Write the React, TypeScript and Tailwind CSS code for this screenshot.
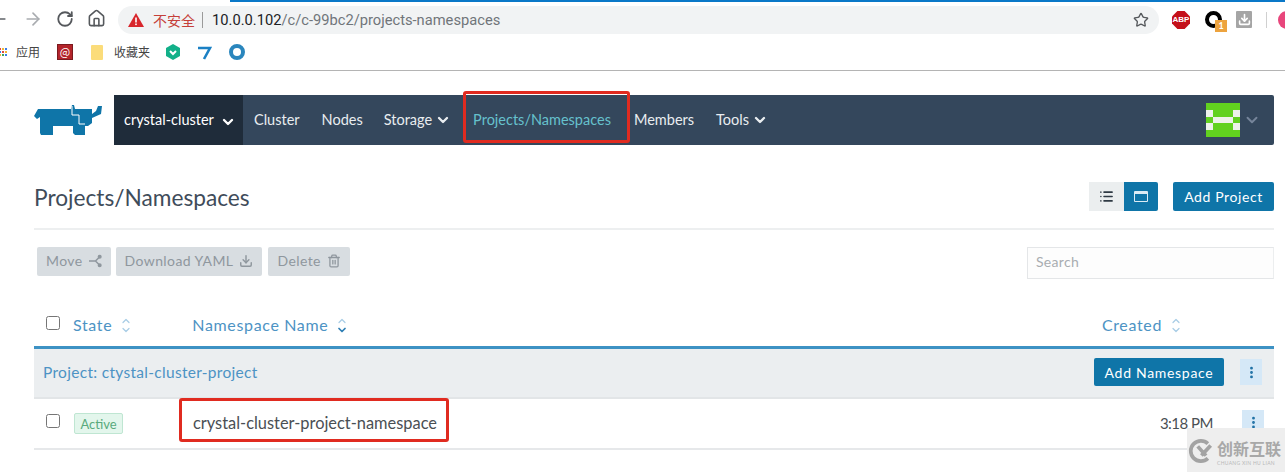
import React from 'react';
import { ArrowLeft, ArrowRight, RotateCw, Home, Star, ChevronDown, ChevronUp, Download, Trash2, List, EllipsisVertical } from 'lucide-react';

const SortIcon = ({ active }: { active?: boolean }) => (
  <span className="flex flex-col items-center -space-y-[3px]">
    <ChevronUp size={12} strokeWidth={2.5} className="text-[#a9cde6]" />
    <ChevronDown size={12} strokeWidth={active ? 3.5 : 2.5} className={active ? 'text-[#2f7fb5]' : 'text-[#a9cde6]'} />
  </span>
);

const Logo = () => (
  <svg width="68" height="31" viewBox="0 0 68 31">
    <path fill="#0f75a8" d="M4 4 L37 4 L38 0 L40 0 L41 4 L58 4 L58 9 L62 6 L64 1 L68 1 L67 9 L58 13 L58 18 L54 21 L51 21 L51 30 L41 30 L39 28 L39 21 L19 21 L19 30 L7 30 L6 28 L6 12 L3 14 L0 11 Z" />
    <path fill="none" stroke="#fff" strokeWidth="1" d="M38 1 L38 10 L45 10 L45 19 L51 19" />
  </svg>
);

const MoveIcon = () => (
  <svg width="13" height="14" viewBox="0 0 14 14" fill="none" stroke="currentColor" strokeWidth="1.6">
    <path d="M0 7 L7 7 L11 3 M7 7 L11 11" />
    <circle cx="11.5" cy="2.5" r="1.4" fill="currentColor" />
    <circle cx="11.5" cy="11.5" r="1.4" fill="currentColor" />
  </svg>
);

const GreyButton = ({ label, icon, className = '' }: { label: string; icon: React.ReactNode; className?: string }) => (
  <button className={`h-[29px] px-[9px] pb-[2px] flex items-center gap-[6px] rounded-[2px] bg-[#d8dde1] text-[#8f979e] text-[14px] tracking-[0.4px] ${className}`}>
    {label}
    {icon}
  </button>
);

const KebabButton = ({ className }: { className: string }) => (
  <button className={`w-[22px] h-[26px] flex items-center justify-center bg-[#d5e8f7] text-[#1b6ea3] ${className}`}>
    <EllipsisVertical size={15} strokeWidth={2.5} />
  </button>
);

const Avatar = () => (
  <div className="w-[34px] h-[34px] bg-[#62d11f] grid grid-cols-5 grid-rows-5">
    <span className="col-start-1 row-start-2 bg-[#eef1ea]" />
    <span className="col-start-5 row-start-2 bg-[#eef1ea]" />
    <span className="col-start-1 col-end-6 row-start-3 mx-[7px] bg-[#eef1ea]" />
    <span className="col-start-1 row-start-4 bg-[#eef1ea]" />
    <span className="col-start-5 row-start-4 bg-[#eef1ea]" />
  </div>
);

export default function App() {
  return (
    <div className="relative w-[1285px] h-[472px] overflow-hidden bg-white font-['Lato','Noto_Sans_CJK_SC',sans-serif] text-[#3f4a54]">
      {/* browser chrome */}
      <div className="h-[71px] border-b border-[#b4b4b4] relative">
        <div className="absolute top-0 left-[230px] right-0 h-[2px] bg-[#0a78c8]" />
        <div className="h-[39px] pt-[6px] flex items-start">
          <ArrowLeft size={20} className="ml-[-11px] mt-[3px] shrink-0 text-[#5f6368]" />
          <ArrowRight size={20} className="ml-[14px] mt-[3px] shrink-0 text-[#a9acb0]" />
          <RotateCw size={18} strokeWidth={2.4} className="ml-[13px] mt-[4px] shrink-0 text-[#55585c]" />
          <Home size={19} className="ml-[13px] mt-[3px] shrink-0 text-[#55585c]" />
          <div className="ml-[12px] w-[1041px] h-[28px] shrink-0 rounded-full bg-[#f1f3f4] flex items-center pl-[10px] pr-[10px]">
            <svg width="16" height="14" viewBox="0 0 16 14">
              <path fill="#d8262c" d="M8 0 L16 14 L0 14 Z" />
              <rect x="7.2" y="4.5" width="1.6" height="5" fill="#fff" />
              <rect x="7.2" y="10.5" width="1.6" height="1.6" fill="#fff" />
            </svg>
            <span className="ml-[9px] text-[14px] text-[#c5403a] font-['Noto_Sans_CJK_SC',sans-serif]">不安全</span>
            <span className="ml-[7px] w-px h-[16px] bg-[#9a9a9a]" />
            <span className="ml-[9px] text-[14.7px] font-['Roboto',sans-serif] text-[#202124]">
              10.0.0.102<span className="text-[#70757a]">/c/c-99bc2/projects-namespaces</span>
            </span>
            <Star size={16} className="ml-auto text-[#55585c]" />
          </div>
          <div className="relative ml-[13px] mt-[5px] w-[18px] h-[18px] shrink-0 bg-[#c4101a] [clip-path:polygon(30%_0,70%_0,100%_30%,100%_70%,70%_100%,30%_100%,0_70%,0_30%)] flex items-center justify-center text-white text-[8px] font-bold font-['Liberation_Sans',sans-serif]">
            ABP
          </div>
          <div className="relative ml-[15px] mt-[5px] w-[17px] h-[17px] shrink-0 rounded-full border-[4px] border-black">
            <span className="absolute left-[6px] top-[5px] w-[12px] h-[12px] bg-[#eda33e] text-white text-[9px] leading-[12px] text-center font-bold">1</span>
          </div>
          <div className="ml-[14px] mt-[5px] w-[16px] h-[17px] shrink-0 rounded-[1px] bg-[#a5a5a5] flex items-center justify-center">
            <Download size={13} strokeWidth={3} className="text-white" />
          </div>
          <span className="ml-[14px] mt-[6px] w-px h-[16px] shrink-0 bg-[#d0d0d0]" />
          <span className="ml-[11px] mt-[5px] w-[18px] h-[18px] rounded-full bg-[#e8467c] shrink-0" />
        </div>
        <div className="h-[24px] mt-[1px] flex items-center text-[12px] text-[#444] font-['Noto_Sans_CJK_SC',sans-serif]">
          <div className="ml-[-1px] grid grid-cols-3 gap-[1px] w-[8px]">
            <span className="h-[2px] bg-[#e0483e]" /><span className="h-[2px] bg-[#f2b632]" /><span className="h-[2px] bg-[#3a7de8]" />
            <span className="h-[2px] bg-[#3a7de8]" /><span className="h-[2px] bg-[#e0483e]" /><span className="h-[2px] bg-[#f2b632]" />
            <span className="h-[2px] bg-[#f2b632]" /><span className="h-[2px] bg-[#3ba55c]" /><span className="h-[2px] bg-[#3a7de8]" />
          </div>
          <span className="ml-[9px]">应用</span>
          <span className="ml-[17px] w-[16px] h-[16px] bg-[#b3242a] border border-[#7b1a1e] text-white text-[11px] leading-[13px] text-center">@</span>
          <span className="ml-[18px] w-[12px] h-[15px] bg-[#fbdc7a] rounded-[1px]" />
          <span className="ml-[11px]">收藏夹</span>
          <svg className="ml-[15px]" width="16" height="16" viewBox="0 0 16 16">
            <path fill="#12b089" d="M8 0 L15 4 L15 12 L8 16 L1 12 L1 4 Z" />
            <path fill="none" stroke="#fff" strokeWidth="2" d="M5 7 L8 10 L11 7" />
          </svg>
          <svg className="ml-[16px]" width="15" height="15" viewBox="0 0 15 15">
            <path fill="none" stroke="#1b80c4" strokeWidth="2.6" d="M1 3 L13 3 L7 14" />
          </svg>
          <span className="ml-[17px] w-[16px] h-[16px] rounded-full border-[4px] border-[#2a86bd]" />
        </div>
      </div>

      {/* rancher header */}
      <div className="mt-[24px] ml-[34px] w-[1240px] flex items-center">
        <div className="w-[80px] h-[50px] flex items-center">
          <Logo />
        </div>
        <nav className="flex-1 h-[50px] bg-[#34475c] rounded-r-[2px] flex items-center text-[14.5px] text-[#e9edf0]">
          <div className="w-[129px] h-full bg-[#1f2c3a] pl-[10px] flex items-center gap-[6px] text-white">
            crystal-cluster
            <ChevronDown size={16} strokeWidth={3.5} className="mt-[4px]" />
          </div>
          <span className="ml-[11px]">Cluster</span>
          <span className="ml-[22px]">Nodes</span>
          <span className="ml-[21px] flex items-center gap-[3px]">
            Storage <ChevronDown size={16} strokeWidth={3.5} />
          </span>
          <span className="ml-[22px] text-[#66c1cd]">Projects/Namespaces</span>
          <span className="ml-[23px]">Members</span>
          <span className="ml-[22px] flex items-center gap-[3px]">
            Tools <ChevronDown size={16} strokeWidth={3.5} />
          </span>
          <div className="ml-auto mr-[13px] flex items-center gap-[3px]">
            <Avatar />
            <ChevronDown size={18} strokeWidth={2.5} className="text-[#76859a]" />
          </div>
        </nav>
      </div>

      {/* page title */}
      <div className="ml-[34px] w-[1240px] h-[85px] border-b-2 border-[#edeff0] flex items-center">
        <h1 className="text-[22.7px] text-[#3f4c5a] mt-[24px]">Projects/Namespaces</h1>
        <div className="ml-auto mt-[20px] flex items-center">
          <div className="w-[35px] h-[29px] bg-[#ebeeef] flex items-center justify-center text-[#2f3a44]">
            <List size={15} strokeWidth={2.5} />
          </div>
          <div className="w-[34px] h-[29px] bg-[#0f75a8] rounded-r-[2px] flex items-center justify-center">
            <span className="w-[14px] h-[11px] border border-[#dcecf5] border-t-[3px] rounded-[1px]" />
          </div>
          <button className="ml-[15px] w-[101px] h-[29px] rounded-[2px] bg-[#0f75a8] text-white text-[14px] tracking-[0.6px]">
            Add Project
          </button>
        </div>
      </div>

      {/* bulk actions + search */}
      <div className="ml-[37px] w-[1237px] mt-[17px] flex items-start">
        <div className="flex gap-[5px]">
          <GreyButton label="Move" icon={<MoveIcon />} />
          <GreyButton label="Download YAML" icon={<Download size={14} strokeWidth={2.5} />} />
          <GreyButton label="Delete" icon={<Trash2 size={14} strokeWidth={2.2} />} className="ml-[1px]" />
        </div>
        <div className="ml-auto w-[247px] h-[32px] pb-[3px] border border-[#e4e6e8] border-r-[#eceeef] bg-[#fdfdfd] pl-[8px] flex items-center text-[14px] text-[#a9adb1] tracking-[0.3px]">
          Search
        </div>
      </div>

      {/* table header */}
      <div className="ml-[34px] w-[1240px] h-[42px] mt-[25px] flex items-center text-[16px] tracking-[0.65px] text-[#4d93c4]">
        <input type="checkbox" readOnly className="ml-[12px] w-[14px] h-[14px] mb-[5px]" />
        <span className="ml-[13px] flex items-center gap-[8px]">State <SortIcon /></span>
        <span className="ml-[60px] flex items-center gap-[8px]">Namespace Name <SortIcon active /></span>
        <span className="ml-auto mr-[92px] flex items-center gap-[8px]">Created <SortIcon /></span>
      </div>

      {/* project group */}
      <div className="ml-[34px] w-[1240px] h-[53px] border-t-[3px] border-[#3d92c4] border-b-2 border-b-[#e2e5e7] bg-[#ebeef0] flex items-center">
        <span className="ml-[9px] text-[15.5px] tracking-[0.3px] text-[#4d93c4]">Project: ctystal-cluster-project</span>
        <button className="ml-auto w-[130px] h-[28px] mb-[2px] rounded-[2px] bg-[#0f75a8] text-white text-[14px] tracking-[0.7px]">
          Add Namespace
        </button>
        <KebabButton className="ml-[16px] mr-[12px] mb-[2px]" />
      </div>

      {/* namespace row */}
      <div className="ml-[34px] w-[1240px] h-[51px] border-b-2 border-[#e6e8ea] flex items-center">
        <input type="checkbox" readOnly className="ml-[12px] w-[14px] h-[14px] mb-[5px]" />
        <span className="ml-[14px] w-[49px] h-[21px] border border-[#bfe6d2] rounded-[2px] bg-[#e3f6ec] text-[#5aaa7c] text-[13px] leading-[20px] text-center">
          Active
        </span>
        <span className="ml-[70px] text-[16.4px] text-[#4a4f54]">crystal-cluster-project-namespace</span>
        <span className="ml-auto text-[15px] text-[#4a4f54] -tracking-[0.5px]">3:18 PM</span>
        <KebabButton className="ml-[29px] mr-[10px] mb-[2px]" />
      </div>

      {/* annotation boxes */}
      <div className="absolute left-[463px] top-[91px] w-[167px] h-[52px] border-[3px] border-[#e02b20] rounded-[3px]" />
      <div className="absolute left-[179px] top-[398px] w-[270px] h-[44px] border-[3px] border-[#e02b20] rounded-[3px]" />

      {/* watermark */}
      <div className="absolute right-0 bottom-0 w-[98px] h-[44px] bg-[#eeeeee] flex items-start pt-[11px] pl-[1px] gap-[4px]">
        <svg className="shrink-0" width="25" height="24" viewBox="0 0 26 26" fill="none" stroke="#a3a3a3">
          <path strokeWidth="4" d="M21 5 A11 11 0 1 0 21 21" />
          <path strokeWidth="4" d="M10 8 L19 18 M24 7 L14 18" />
        </svg>
        <div className="flex flex-col">
          <span className="text-[16px] leading-[18px] text-[#a8a8a8] font-['Noto_Sans_CJK_SC',sans-serif] font-bold whitespace-nowrap">创新互联</span>
          <span className="mt-[3px] text-[5px] leading-[6px] text-[#b8b8b8] tracking-[0.3px] whitespace-nowrap">CHUANG XIN HU LIAN</span>
        </div>
      </div>
    </div>
  );
}
